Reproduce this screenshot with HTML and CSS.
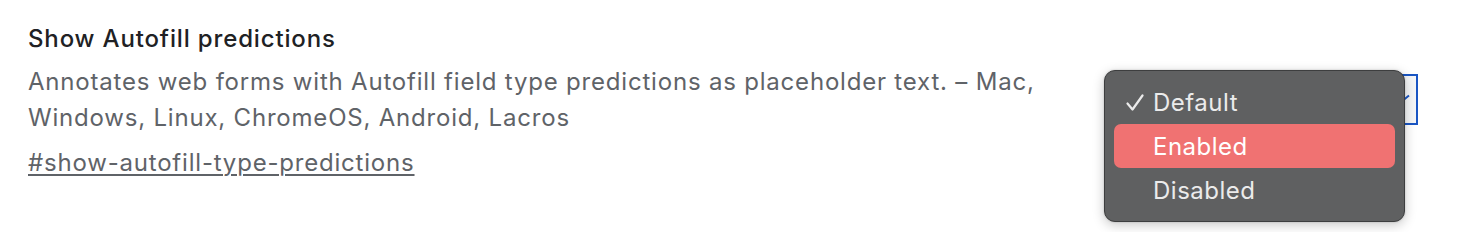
FILE: index.html
```html
<!DOCTYPE html>
<html>
<head>
<meta charset="utf-8">
<link rel="stylesheet" href="styles.css">
</head>
<body>
<div class="experiment">
  <div class="info">
    <h3 class="title">Show Autofill predictions</h3>
    <p class="desc">Annotates web forms with Autofill field type predictions as placeholder text. – Mac, Windows, Linux, ChromeOS, Android, Lacros</p>
    <a class="permalink" href="#show-autofill-type-predictions">#show-autofill-type-predictions</a>
  </div>
  <div class="actions">
    <div class="select">
      <svg class="chevron" width="18" height="10" viewBox="0 0 18 10"><path d="M1 1.5 L9 8 L17 1.5" fill="none" stroke="#1a56c4" stroke-width="2"/></svg>
    </div>
    <ul class="menu">
      <li class="item"><span class="check"><svg width="18" height="17" viewBox="0 0 18 17"><path d="M1.5 9.5 L6.5 15.5 L16.5 1.5" fill="none" stroke="#ebebeb" stroke-width="2.2" stroke-linecap="round" stroke-linejoin="round"/></svg></span>Default</li>
      <li class="item active"><span class="check"></span>Enabled</li>
      <li class="item"><span class="check"></span>Disabled</li>
    </ul>
  </div>
</div>
</body>
</html>
```
FILE: styles.css
```css
html, body {
  margin: 0;
  background: #ffffff;
  font-family: Inter, "Noto Sans", "Liberation Sans", sans-serif;
}
body {
  min-height: 100vh;
}
.experiment {
  display: flex;
  justify-content: space-between;
  padding: 25px 42px 0 28px;
}
.info {
  flex: 0 0 1040px;
}
.title {
  margin: 0;
  font-size: 24px;
  font-weight: 500;
  line-height: 28px;
  letter-spacing: 0.85px;
  color: #202124;
}
.desc {
  margin: 11px 0 0;
  font-size: 24px;
  line-height: 36px;
  letter-spacing: 0.8px;
  color: #5f6368;
}
.permalink {
  display: inline-block;
  margin-top: 12px;
  font-size: 24px;
  line-height: 30px;
  letter-spacing: 0.8px;
  color: #5f6368;
  text-decoration: underline;
  text-decoration-thickness: 1.5px;
  text-underline-offset: 3px;
}
.actions {
  position: relative;
  flex: 0 0 250px;
  padding-top: 49px;
}
.select {
  height: 47px;
  border: 2px solid #1a56c4;
  background: #f5f6f7;
  display: flex;
  align-items: center;
  justify-content: flex-end;
  padding: 0 6px 0 16px;
}
.chevron {
  margin-top: -2px;
}
.menu {
  position: absolute;
  right: 13px;
  top: 45px;
  width: 301px;
  height: 152px;
  margin: 0;
  padding: 9px;
  list-style: none;
  background: #5f6061;
  border: 1px solid #3d3e3f;
  border-radius: 11px;
  box-shadow: 0 3px 12px rgba(0,0,0,0.22), 0 0 2px rgba(0,0,0,0.2);
  box-sizing: border-box;
}
.item {
  display: flex;
  align-items: center;
  height: 44px;
  padding-left: 12px;
  border-radius: 7px;
  font-size: 24px;
  letter-spacing: 0.5px;
  color: #ebebeb;
}
.item.active {
  background: #f07272;
  color: #ffffff;
}
.check {
  display: flex;
  align-items: center;
  width: 27px;
  flex: 0 0 27px;
  margin-top: 1px;
}
```
